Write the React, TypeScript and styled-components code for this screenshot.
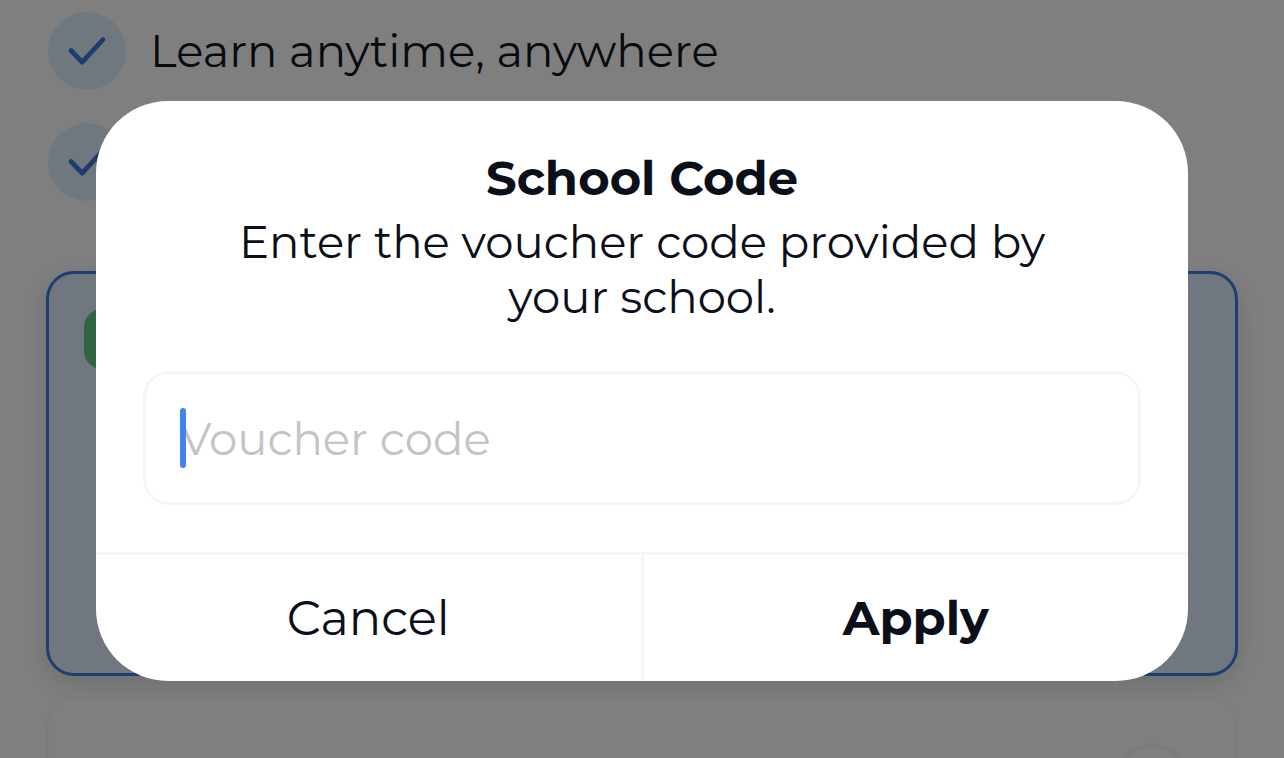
import React from "react";
import styled, { createGlobalStyle } from "styled-components";

const GlobalStyle = createGlobalStyle`
  *, *::before, *::after { box-sizing: border-box; }
  body {
    margin: 0;
    background: #ffffff;
    color: #0b0f1a;
    font-family: Montserrat, Inter, "Open Sans", sans-serif;
    font-weight: 400;
  }
  button, input { font: inherit; color: inherit; }
`;

const Screen = styled.div`
  position: relative;
  height: 100vh;
  overflow: hidden;
`;

const Page = styled.main`
  padding: 12px 46px;
`;

const FeatureList = styled.ul`
  display: flex;
  flex-direction: column;
  gap: 33px;
  margin: 0 0 70px;
  padding: 0 2px;
  list-style: none;
`;

const Feature = styled.li`
  display: flex;
  align-items: center;
  gap: 24px;
  height: 78px;
  font-size: 45px;
  line-height: 60px;
  color: #12151c;
`;

const CheckBadge = styled.span`
  display: grid;
  place-items: center;
  flex: none;
  width: 78px;
  height: 78px;
  border-radius: 50%;
  background: #e0f0ff;
`;

const Plan = styled.section<{ $selected?: boolean }>`
  display: flex;
  justify-content: space-between;
  align-items: flex-start;
  height: 405px;
  margin-bottom: 21px;
  padding: 35px;
  border: 3px solid ${(p) => (p.$selected ? "#3f7ce0" : "#f9f9fa")};
  border-radius: 28px;
  background: ${(p) => (p.$selected ? "#e0effc" : "#ffffff")};
  box-shadow: ${(p) => (p.$selected ? "0 8px 28px rgba(0, 0, 0, 0.14)" : "none")};
`;

const PlanTag = styled.span`
  width: 240px;
  height: 60px;
  border-radius: 18px;
  background: #62c881;
`;

const PlanRadio = styled.input`
  appearance: none;
  width: 72px;
  height: 72px;
  margin: 8px 12px 0 auto;
  border: 4px solid #f6f6f8;
  border-radius: 50%;
`;

const Scrim = styled.div`
  position: absolute;
  inset: 0;
  display: flex;
  align-items: center;
  justify-content: center;
  padding: 24px 96px 0;
  background: rgba(0, 0, 0, 0.5);
`;

const Dialog = styled.form`
  flex: 1;
  overflow: hidden;
  border-radius: 72px;
  background: #ffffff;
`;

const DialogBody = styled.div`
  display: flex;
  flex-direction: column;
  align-items: stretch;
  padding: 47px;
  text-align: center;
`;

const Title = styled.h1`
  margin: 0 0 6px;
  font-size: 48px;
  line-height: 60px;
  font-weight: 700;
`;

const Description = styled.label`
  margin-bottom: 47px;
  padding: 0 72px;
  font-size: 45px;
  line-height: 55px;
`;

const Field = styled.div`
  position: relative;
`;

const CodeInput = styled.input`
  display: block;
  width: 100%;
  height: 134px;
  padding: 0 34px;
  border: 3px solid #f6f6f7;
  border-radius: 26px;
  outline: none;
  background: #ffffff;
  font-size: 45px;
  caret-color: transparent;

  &::placeholder {
    color: #c4c4c4;
    opacity: 1;
  }
`;

const Caret = styled.span`
  position: absolute;
  top: 37px;
  left: 37px;
  width: 6px;
  height: 60px;
  border-radius: 3px;
  background: #4384e8;
`;

const Actions = styled.div`
  display: flex;
  border-top: 3px solid #f5f5f6;
`;

const Action = styled.button<{ $primary?: boolean }>`
  flex: 1;
  height: 126px;
  padding: 0;
  border: 0;
  border-left: ${(p) => (p.$primary ? "3px solid #f5f5f6" : "0")};
  background: none;
  font-size: 48px;
  font-weight: ${(p) => (p.$primary ? 700 : 400)};
`;

function Check() {
  return (
    <CheckBadge>
      <svg width="78" height="78" viewBox="0 0 78 78" fill="none" aria-hidden="true">
        <path
          d="M23 38.5 L34.2 50.2 L55 27.5"
          stroke="#3b78de"
          strokeWidth="4.8"
          strokeLinecap="round"
          strokeLinejoin="round"
        />
      </svg>
    </CheckBadge>
  );
}

export default function App() {
  return (
    <>
      <GlobalStyle />
      <Screen>
        <Page>
          <FeatureList>
            <Feature>
              <Check />
              Learn anytime, anywhere
            </Feature>
            <Feature>
              <Check />
            </Feature>
          </FeatureList>
          <Plan $selected>
            <PlanTag />
          </Plan>
          <Plan>
            <PlanRadio type="radio" name="plan" aria-label="Plan" />
          </Plan>
        </Page>
        <Scrim>
          <Dialog
            role="dialog"
            aria-labelledby="dialog-title"
            onSubmit={(e) => e.preventDefault()}
          >
            <DialogBody>
              <Title id="dialog-title">School Code</Title>
              <Description htmlFor="voucher">
                Enter the voucher code provided by your school.
              </Description>
              <Field>
                <CodeInput id="voucher" type="text" placeholder="Voucher code" />
                <Caret />
              </Field>
            </DialogBody>
            <Actions>
              <Action type="button">Cancel</Action>
              <Action type="submit" $primary>
                Apply
              </Action>
            </Actions>
          </Dialog>
        </Scrim>
      </Screen>
    </>
  );
}
